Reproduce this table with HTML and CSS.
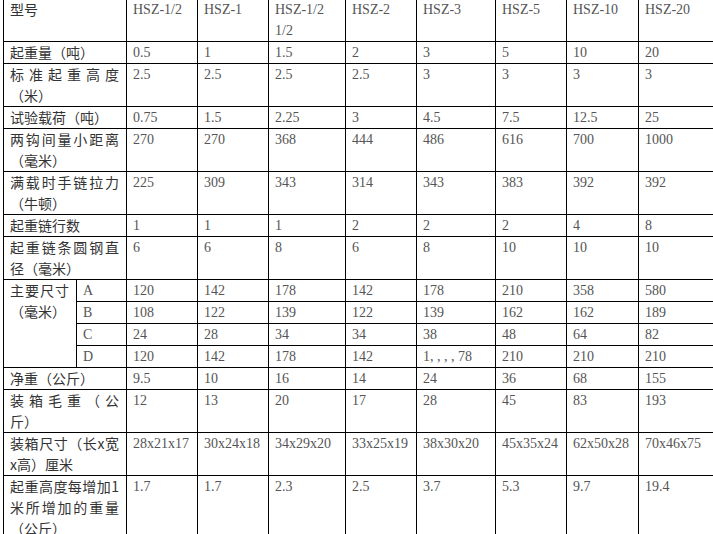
FILE: index.html
```html
<!DOCTYPE html>
<html lang="zh-CN">
<head>
<meta charset="utf-8">
<title>HSZ 手拉葫芦参数表</title>
<link rel="stylesheet" href="styles.css">
</head>
<body>
<div class="wrap">
<table class="spec">
  <colgroup>
    <col class="c-a"><col class="c-b">
    <col class="c2"><col class="c3"><col class="c4"><col class="c5">
    <col class="c6"><col class="c7"><col class="c8"><col class="c9">
  </colgroup>
  <tbody>
    <tr><td class="lbl" colspan="2">型号</td><td>HSZ-1/2</td><td>HSZ-1</td><td>HSZ-1/2 1/2</td><td>HSZ-2</td><td>HSZ-3</td><td>HSZ-5</td><td>HSZ-10</td><td>HSZ-20</td></tr>
    <tr><td class="lbl" colspan="2">起重量（吨）</td><td>0.5</td><td>1</td><td>1.5</td><td>2</td><td>3</td><td>5</td><td>10</td><td>20</td></tr>
    <tr><td class="lbl" colspan="2">标准起重高度（米）</td><td>2.5</td><td>2.5</td><td>2.5</td><td>2.5</td><td>3</td><td>3</td><td>3</td><td>3</td></tr>
    <tr><td class="lbl" colspan="2">试验载荷（吨）</td><td>0.75</td><td>1.5</td><td>2.25</td><td>3</td><td>4.5</td><td>7.5</td><td>12.5</td><td>25</td></tr>
    <tr><td class="lbl" colspan="2">两钩间量小距离（毫米）</td><td>270</td><td>270</td><td>368</td><td>444</td><td>486</td><td>616</td><td>700</td><td>1000</td></tr>
    <tr><td class="lbl" colspan="2">满载时手链拉力（牛顿）</td><td>225</td><td>309</td><td>343</td><td>314</td><td>343</td><td>383</td><td>392</td><td>392</td></tr>
    <tr><td class="lbl" colspan="2">起重链行数</td><td>1</td><td>1</td><td>1</td><td>2</td><td>2</td><td>2</td><td>4</td><td>8</td></tr>
    <tr><td class="lbl" colspan="2">起重链条圆钢直径（毫米）</td><td>6</td><td>6</td><td>8</td><td>6</td><td>8</td><td>10</td><td>10</td><td>10</td></tr>
    <tr><td class="lbl" rowspan="4">主要尺寸（毫米）</td><td>A</td><td>120</td><td>142</td><td>178</td><td>142</td><td>178</td><td>210</td><td>358</td><td>580</td></tr>
    <tr><td>B</td><td>108</td><td>122</td><td>139</td><td>122</td><td>139</td><td>162</td><td>162</td><td>189</td></tr>
    <tr><td>C</td><td>24</td><td>28</td><td>34</td><td>34</td><td>38</td><td>48</td><td>64</td><td>82</td></tr>
    <tr><td>D</td><td>120</td><td>142</td><td>178</td><td>142</td><td>1, , , , 78</td><td>210</td><td>210</td><td>210</td></tr>
    <tr><td class="lbl" colspan="2">净重（公斤）</td><td>9.5</td><td>10</td><td>16</td><td>14</td><td>24</td><td>36</td><td>68</td><td>155</td></tr>
    <tr><td class="lbl" colspan="2">装箱毛重（公斤）</td><td>12</td><td>13</td><td>20</td><td>17</td><td>28</td><td>45</td><td>83</td><td>193</td></tr>
    <tr><td class="lbl" colspan="2">装箱尺寸（长x宽x高）厘米</td><td>28x21x17</td><td>30x24x18</td><td>34x29x20</td><td>33x25x19</td><td>38x30x20</td><td>45x35x24</td><td>62x50x28</td><td>70x46x75</td></tr>
    <tr><td class="lbl" colspan="2">起重高度每增加1米所增加的重量（公斤）</td><td>1.7</td><td>1.7</td><td>2.3</td><td>2.5</td><td>3.7</td><td>5.3</td><td>9.7</td><td>19.4</td></tr>
  </tbody>
</table>
</div>
</body>
</html>
```

FILE: styles.css
```css
html, body {
  margin: 0;
  padding: 0;
  background: #fff;
  overflow: hidden;
}

.wrap {
  padding-left: 3px;
  margin-top: -2px;
}

.spec {
  border-collapse: collapse;
  table-layout: fixed;
  width: 715px;
  font-family: "Liberation Serif", "Noto Sans CJK SC", serif;
  font-size: 14px;
  line-height: 21px;
  color: #555;
  text-spacing-trim: space-all;
}

.c-a { width: 73px; }
.c-b { width: 50px; }
.c2 { width: 71px; }
.c3 { width: 71px; }
.c4 { width: 77px; }
.c5 { width: 71px; }
.c6 { width: 79px; }
.c7 { width: 71px; }
.c8 { width: 72px; }
.c9 { width: 80px; }

.spec td {
  border: 1px solid #000;
  padding: 0 7px 0 6px;
  vertical-align: top;
  text-align: left;
  word-break: normal;
}

.spec td.lbl {
  font-family: "Noto Sans CJK SC", "Liberation Serif", sans-serif;
  color: #333;
  text-align: justify;
  text-spacing-trim: space-all;
}
```
